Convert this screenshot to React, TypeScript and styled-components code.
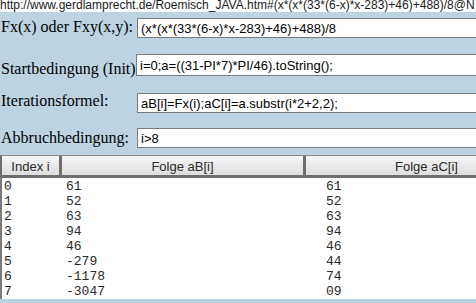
import { createGlobalStyle } from 'styled-components';
import styled from 'styled-components';

const GlobalStyle = createGlobalStyle`
  html, body {
    margin: 0;
    padding: 0;
    width: 476px;
    height: 303px;
    overflow: hidden;
    background: #bed3e2;
  }
`;

const Page = styled.div`
  display: flex;
  flex-direction: column;
  width: 476px;
  height: 303px;
  overflow: hidden;
  background: #bed3e2;
`;

const UrlBar = styled.div`
  height: 12px;
  line-height: 11px;
  background: #ffffff;
  font-family: 'Liberation Sans', Arial, sans-serif;
  font-size: 12px;
  color: #1a1a1a;
  white-space: nowrap;
  overflow: hidden;
`;

const Form = styled.div`
  display: flex;
  flex-direction: column;
`;

const FormRow = styled.div<{ $top: number }>`
  display: flex;
  align-items: flex-start;
  margin-top: ${(p) => p.$top}px;
  white-space: nowrap;
`;

const Label = styled.label<{ $width: number; $shift: number }>`
  flex: 0 0 ${(p) => p.$width}px;
  box-sizing: border-box;
  padding-left: 1px;
  margin-top: ${(p) => p.$shift}px;
  font-family: 'Liberation Serif', 'Times New Roman', serif;
  font-size: 16px;
  line-height: 18px;
  color: #000;
`;

const Field = styled.input<{ $height: number; $shift: number }>`
  flex: 0 0 360px;
  box-sizing: border-box;
  height: ${(p) => p.$height}px;
  margin: ${(p) => p.$shift}px 0 0 0;
  padding: 0 0 0 3px;
  border: 1px solid #7a7a7a;
  background: #fff;
  font-family: 'Liberation Sans', Arial, sans-serif;
  font-size: 13px;
  color: #000;
  outline: none;
`;

const Table = styled.div`
  margin-top: 7px;
  width: 548px;
  display: flex;
  flex-direction: column;
`;

const HeadRow = styled.div`
  display: grid;
  grid-template-columns: 60px 244px 244px;
  height: 23px;
  box-sizing: border-box;
  border-top: 1px solid #8c8c8c;
  border-bottom: 3px solid #6e6e6e;
  border-left: 2px solid #6e6e6e;
  background: linear-gradient(#f6f6f6, #dedede);
`;

const HeadCell = styled.div`
  display: flex;
  align-items: center;
  justify-content: center;
  border-right: 3px solid #6e6e6e;
  font-family: 'Liberation Sans', Arial, sans-serif;
  font-size: 13px;
  color: #2b2b2b;
  padding-top: 1px;
`;

const Body = styled.div`
  display: flex;
  flex-direction: column;
  background: #fff;
  border-left: 2px solid #7a7a7a;
  padding-top: 1px;
  flex: 1;
`;

const DataRow = styled.div`
  display: grid;
  grid-template-columns: 62px 260px 1fr;
  height: 15px;
  font-family: 'Liberation Mono', 'Courier New', monospace;
  font-size: 13px;
  line-height: 15px;
  color: #2a2a2a;
`;

const DataCell = styled.div`
  padding-left: 2px;
  white-space: pre;
`;

const rows: [number, string, string][] = [
  [0, '61', '61'],
  [1, '52', '52'],
  [2, '63', '63'],
  [3, '94', '94'],
  [4, '46', '46'],
  [5, '-279', '44'],
  [6, '-1178', '74'],
  [7, '-3047', '09'],
];

export default function App() {
  return (
    <Page>
      <GlobalStyle />
      <UrlBar>http://www.gerdlamprecht.de/Roemisch_JAVA.htm#(x*(x*(33*(6-x)*x-283)+46)+488)/8@N</UrlBar>
      <Form>
        <FormRow $top={6}>
          <Label $width={137} $shift={0}>Fx(x) oder Fxy(x,y):</Label>
          <Field $height={20} $shift={0} defaultValue="(x*(x*(33*(6-x)*x-283)+46)+488)/8" />
        </FormRow>
        <FormRow $top={16}>
          <Label $width={136} $shift={6}>Startbedingung (Init)</Label>
          <Field $height={22} $shift={0} defaultValue="i=0;a=((31-PI*7)*PI/46).toString();" />
        </FormRow>
        <FormRow $top={14}>
          <Label $width={137} $shift={0}>Iterationsformel:</Label>
          <Field $height={20} $shift={1} defaultValue="aB[i]=Fx(i);aC[i]=a.substr(i*2+2,2);" />
        </FormRow>
        <FormRow $top={15}>
          <Label $width={137} $shift={1}>Abbruchbedingung:</Label>
          <Field $height={20} $shift={0} defaultValue="i>8" />
        </FormRow>
      </Form>
      <Table>
        <HeadRow>
          <HeadCell>Index i</HeadCell>
          <HeadCell>Folge aB[i]</HeadCell>
          <HeadCell>Folge aC[i]</HeadCell>
        </HeadRow>
        <Body>
          {rows.map(([i, b, c]) => (
            <DataRow key={i}>
              <DataCell>{i}</DataCell>
              <DataCell>{b}</DataCell>
              <DataCell>{c}</DataCell>
            </DataRow>
          ))}
        </Body>
      </Table>
    </Page>
  );
}
